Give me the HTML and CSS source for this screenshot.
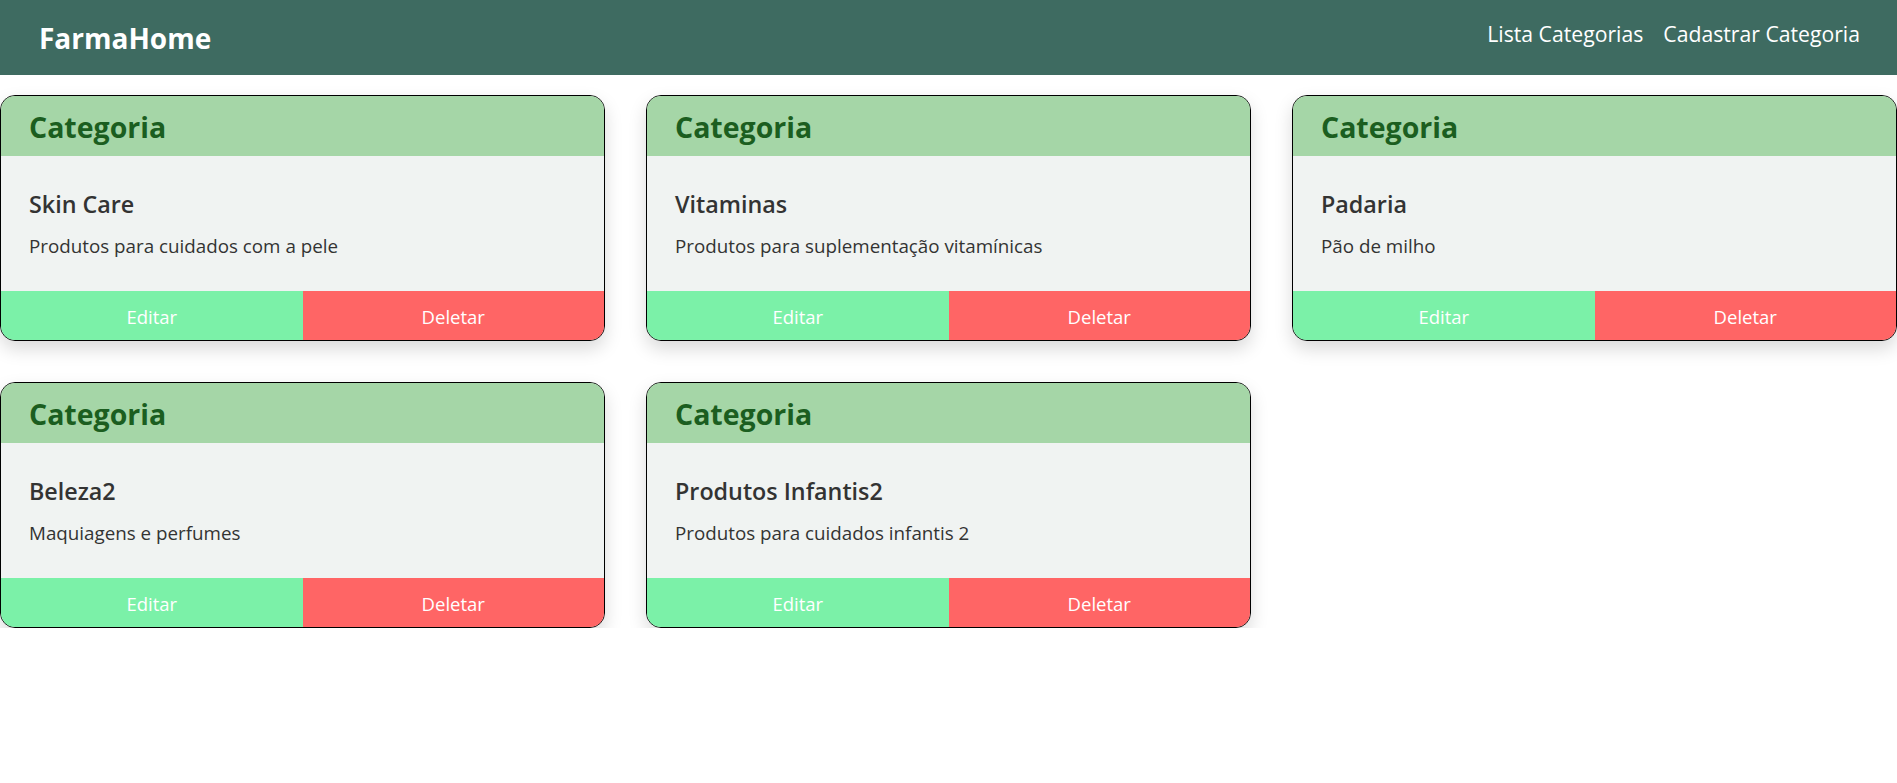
FILE: index.html
```html
<!DOCTYPE html>
<html lang="pt-BR">
<head>
<meta charset="utf-8">
<title>FarmaHome</title>
<link rel="stylesheet" href="styles.css">
</head>
<body>
<nav class="navbar">
  <span class="brand">FarmaHome</span>
  <div class="links">
    <a class="link" href="#">Lista Categorias</a>
    <a class="link" href="#">Cadastrar Categoria</a>
  </div>
</nav>
<main class="grid">
  <div class="card">
    <div class="card-header"><h2 class="card-title">Categoria</h2></div>
    <div class="card-body">
      <h3 class="name">Skin Care</h3>
      <p class="desc">Produtos para cuidados com a pele</p>
    </div>
    <div class="card-footer">
      <button class="btn btn-edit">Editar</button>
      <button class="btn btn-delete">Deletar</button>
    </div>
  </div>
  <div class="card">
    <div class="card-header"><h2 class="card-title">Categoria</h2></div>
    <div class="card-body">
      <h3 class="name">Vitaminas</h3>
      <p class="desc">Produtos para suplementação vitamínicas</p>
    </div>
    <div class="card-footer">
      <button class="btn btn-edit">Editar</button>
      <button class="btn btn-delete">Deletar</button>
    </div>
  </div>
  <div class="card">
    <div class="card-header"><h2 class="card-title">Categoria</h2></div>
    <div class="card-body">
      <h3 class="name">Padaria</h3>
      <p class="desc">Pão de milho</p>
    </div>
    <div class="card-footer">
      <button class="btn btn-edit">Editar</button>
      <button class="btn btn-delete">Deletar</button>
    </div>
  </div>
  <div class="card">
    <div class="card-header"><h2 class="card-title">Categoria</h2></div>
    <div class="card-body">
      <h3 class="name">Beleza2</h3>
      <p class="desc">Maquiagens e perfumes</p>
    </div>
    <div class="card-footer">
      <button class="btn btn-edit">Editar</button>
      <button class="btn btn-delete">Deletar</button>
    </div>
  </div>
  <div class="card">
    <div class="card-header"><h2 class="card-title">Categoria</h2></div>
    <div class="card-body">
      <h3 class="name">Produtos Infantis2</h3>
      <p class="desc">Produtos para cuidados infantis 2</p>
    </div>
    <div class="card-footer">
      <button class="btn btn-edit">Editar</button>
      <button class="btn btn-delete">Deletar</button>
    </div>
  </div>
</main>
</body>
</html>
```
FILE: styles.css
```css
* { box-sizing: border-box; }
html, body {
  margin: 0;
  padding: 0;
  background: #ffffff;
  font-family: "Open Sans", "Noto Sans", sans-serif;
}
.navbar {
  height: 75px;
  background: #3e6b61;
  display: flex;
  align-items: center;
  justify-content: space-between;
  padding: 0 37px 0 39px;
}
.brand {
  color: #ffffff;
  font-weight: 700;
  font-size: 28px;
  line-height: 1;
}
.links {
  display: flex;
  gap: 20px;
  margin-top: -8px;
}
.link {
  color: #ffffff;
  text-decoration: none;
  font-size: 21.2px;
  line-height: 1;
}
.grid {
  display: grid;
  grid-template-columns: repeat(3, 1fr);
  column-gap: 41px;
  row-gap: 41px;
  padding-top: 20px;
}
.card {
  border: 1px solid #000000;
  border-radius: 15px;
  overflow: hidden;
  background: #f0f3f2;
  box-shadow: 0 8px 18px rgba(0, 0, 0, 0.15);
}
.card-header {
  background: #a5d6a7;
  height: 60px;
  padding: 2px 28px 0;
}
.card-title {
  margin: 0;
  color: #1b5e20;
  font-size: 28.5px;
  font-weight: 700;
  line-height: 58px;
}
.card-body {
  padding: 32px 28px 32px;
  color: #333333;
}
.name {
  margin: 0 0 13px;
  font-size: 23.3px;
  font-weight: 600;
  line-height: 32px;
}
.desc {
  margin: 0;
  font-size: 18.8px;
  line-height: 26px;
}
.card-footer {
  display: flex;
}
.btn {
  flex: 1;
  height: 49px;
  border: 0;
  padding: 2px 0 0;
  margin: 0;
  color: #ffffff;
  font-family: "Open Sans", "Noto Sans", sans-serif;
  font-size: 18.5px;
  line-height: 47px;
  cursor: pointer;
}
.btn-edit { background: #7bf1a8; }
.btn-delete { background: #ff6565; }
```
